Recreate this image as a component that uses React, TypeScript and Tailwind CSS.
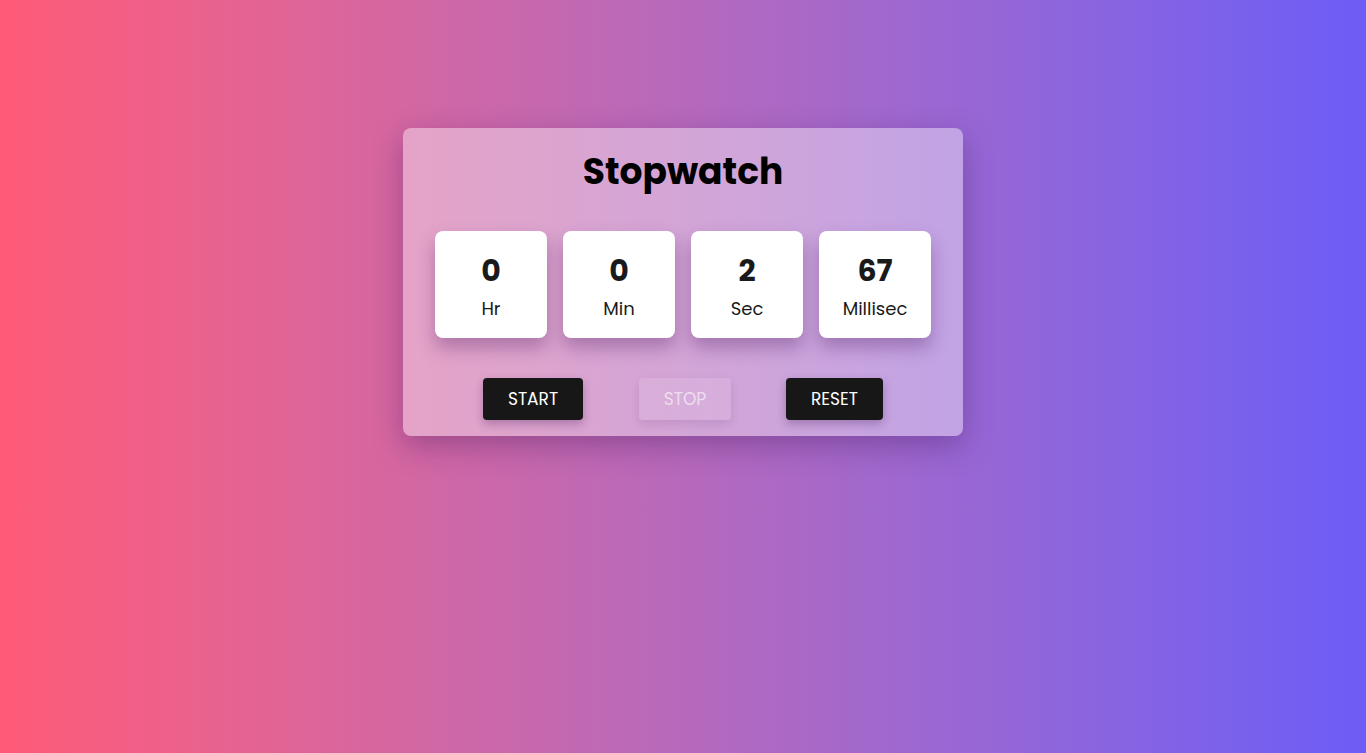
import { useState } from 'react';

const units = [
  { value: '0', label: 'Hr' },
  { value: '0', label: 'Min' },
  { value: '2', label: 'Sec' },
  { value: '67', label: 'Millisec' },
];

export default function App() {
  const [running] = useState(false);

  return (
    <div
      className="min-h-screen w-full bg-gradient-to-r from-[#ff5a77] to-[#6c5cf6] flex justify-center items-start pt-[128px]"
      style={{ fontFamily: 'Poppins, Inter, "Noto Sans", sans-serif' }}
    >
      <div className="w-[560px] h-[308px] rounded-lg bg-white/40 shadow-[0_10px_30px_rgba(60,20,90,0.35)] flex flex-col items-center pt-[17px]">
        <h1 className="text-[36px] leading-[54px] font-bold text-black">Stopwatch</h1>

        <div className="mt-[32px] flex gap-4">
          {units.map((u) => (
            <div
              key={u.label}
              className="w-[112px] h-[107px] rounded-lg bg-white shadow-[0_10px_18px_rgba(80,30,100,0.35)] flex flex-col items-center pt-[19px]"
            >
              <span className="text-[30px] leading-[42px] font-bold text-[#1a1a1a]">{u.value}</span>
              <span className="mt-[4px] text-[18px] leading-[26px] text-[#1a1a1a]">{u.label}</span>
            </div>
          ))}
        </div>

        <div className="mt-[40px] flex">
          <button className="w-[100px] h-[42px] pt-[2px] rounded bg-[#171717] text-white text-[17px] shadow-[0_4px_10px_rgba(60,20,80,0.3)]">
            START
          </button>
          <button
            disabled={!running}
            className="ml-[56px] w-[92px] h-[42px] pt-[2px] rounded bg-white/10 text-white/60 text-[17px] shadow-[0_4px_10px_rgba(60,20,80,0.12)]"
          >
            STOP
          </button>
          <button className="ml-[55px] w-[97px] h-[42px] pt-[2px] rounded bg-[#171717] text-white text-[17px] shadow-[0_4px_10px_rgba(60,20,80,0.3)]">
            RESET
          </button>
        </div>
      </div>
    </div>
  );
}
